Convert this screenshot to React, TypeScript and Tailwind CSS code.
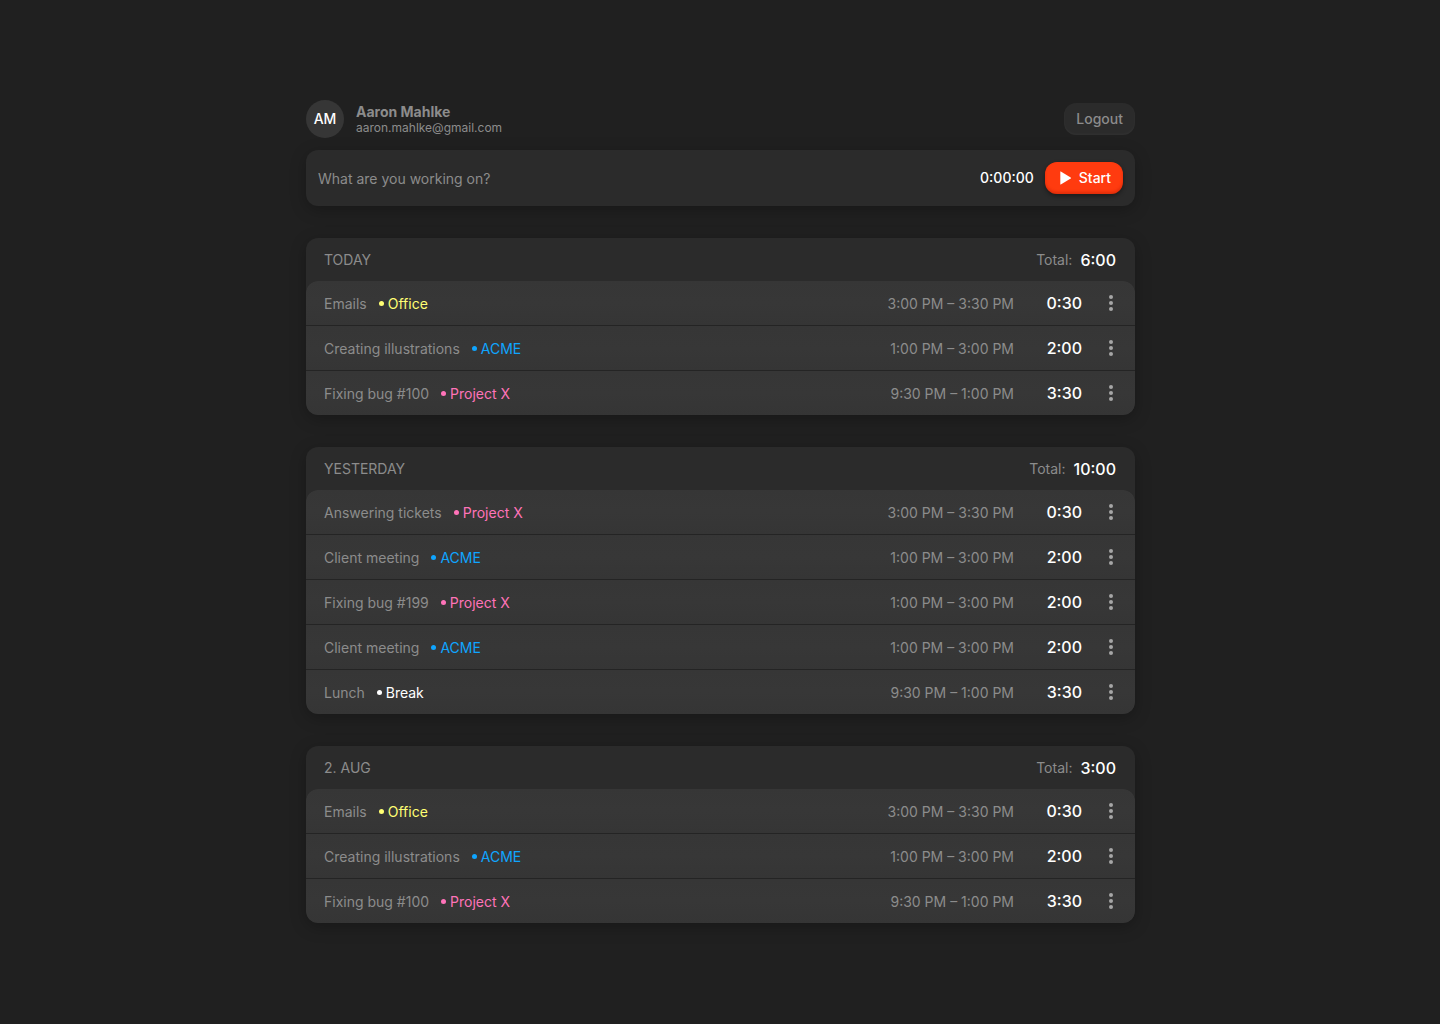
const projects = {
  Office: 'text-[#ffff73]',
  ACME: 'text-[#0fa5ff]',
  'Project X': 'text-[#ff73b9]',
  Break: 'text-white',
};

type Entry = {
  task: string;
  project: keyof typeof projects;
  range: string;
  duration: string;
};

type Day = { title: string; total: string; entries: Entry[] };

const shortDay: Entry[] = [
  { task: 'Emails', project: 'Office', range: '3:00 PM – 3:30 PM', duration: '0:30' },
  { task: 'Creating illustrations', project: 'ACME', range: '1:00 PM – 3:00 PM', duration: '2:00' },
  { task: 'Fixing bug #100', project: 'Project X', range: '9:30 PM – 1:00 PM', duration: '3:30' },
];

const days: Day[] = [
  { title: 'TODAY', total: '6:00', entries: shortDay },
  {
    title: 'YESTERDAY',
    total: '10:00',
    entries: [
      { task: 'Answering tickets', project: 'Project X', range: '3:00 PM – 3:30 PM', duration: '0:30' },
      { task: 'Client meeting', project: 'ACME', range: '1:00 PM – 3:00 PM', duration: '2:00' },
      { task: 'Fixing bug #199', project: 'Project X', range: '1:00 PM – 3:00 PM', duration: '2:00' },
      { task: 'Client meeting', project: 'ACME', range: '1:00 PM – 3:00 PM', duration: '2:00' },
      { task: 'Lunch', project: 'Break', range: '9:30 PM – 1:00 PM', duration: '3:30' },
    ],
  },
  { title: '2. AUG', total: '3:00', entries: shortDay },
];

function EntryRow({ entry }: { entry: Entry }) {
  return (
    <li className="flex h-11 items-center bg-linear-to-b from-[#363636] via-[#373737] to-[#353535] pr-3 pl-[18px]">
      <span className="pt-px">{entry.task}</span>
      <span className={`ml-3 flex items-center gap-1 ${projects[entry.project]}`}>
        <span className="size-[5px] rounded-full bg-current" />
        <span className="pt-px">{entry.project}</span>
      </span>
      <span className="ml-auto pt-px">{entry.range}</span>
      <span className="w-[68px] text-right text-base font-medium text-white">{entry.duration}</span>
      <button
        type="button"
        aria-label={`Options for ${entry.task}`}
        className="ml-[17px] flex h-8 w-6 items-center justify-center text-[#a6a6a6]"
      >
        <svg width="4" height="16" viewBox="0 0 4 16" fill="currentColor" aria-hidden="true">
          <circle cx="2" cy="2" r="2" />
          <circle cx="2" cy="8" r="2" />
          <circle cx="2" cy="14" r="2" />
        </svg>
      </button>
    </li>
  );
}

function DaySection({ day }: { day: Day }) {
  return (
    <section className="overflow-hidden rounded-xl bg-[#2b2b2b] shadow-[0_4px_16px_rgba(0,0,0,0.25)]">
      <header className="flex h-[43px] items-center justify-between pr-[19px] pl-[18px]">
        <h2>{day.title}</h2>
        <p className="flex items-center gap-2">
          Total: <span className="text-base font-medium text-white">{day.total}</span>
        </p>
      </header>
      <ul className="flex flex-col gap-px overflow-hidden rounded-xl bg-[#242424]">
        {day.entries.map((entry, index) => (
          <EntryRow key={index} entry={entry} />
        ))}
      </ul>
    </section>
  );
}

export default function App() {
  return (
    <div className="min-h-screen bg-[#202020] pt-[100px] pb-[101px] pl-px font-['Inter',sans-serif] text-sm text-[#8c8c8c]">
      <main className="mx-auto max-w-[829px]">
        <header className="flex items-center">
          <div className="flex size-[38px] items-center justify-center rounded-full bg-[#363636] font-medium text-white">
            AM
          </div>
          <div className="ml-3 pt-0.5">
            <p className="leading-4 font-bold">Aaron Mahlke</p>
            <p className="text-xs leading-4">aaron.mahlke@gmail.com</p>
          </div>
          <button
            type="button"
            className="ml-auto h-8 rounded-xl bg-[#2b2b2b] px-3 font-medium shadow-[inset_0_-1px_3px_rgba(255,255,255,0.04)]"
          >
            Logout
          </button>
        </header>

        <form
          className="mt-3 flex h-14 items-center rounded-xl bg-[#2b2b2b] px-3 shadow-[0_4px_16px_rgba(0,0,0,0.25)]"
          onSubmit={(event) => event.preventDefault()}
        >
          <input
            type="text"
            aria-label="Current task"
            placeholder="What are you working on?"
            className="min-w-0 flex-1 bg-transparent pt-px outline-none placeholder:text-[#8c8c8c]"
          />
          <span className="font-medium text-white">0:00:00</span>
          <button
            type="submit"
            className="ml-[11px] flex h-8 items-center gap-2 rounded-xl bg-[#ff3b0f] pr-3 pl-[15px] font-medium text-white shadow-[0_2px_4px_rgba(0,0,0,0.4),inset_0_-2px_3px_rgba(160,20,0,0.35)]"
          >
            <svg width="11" height="14" viewBox="0 0 11 14" fill="currentColor" aria-hidden="true">
              <path d="M.3.7v12.6q0 .5.5.2l9.9-6.1q.5-.4 0-.8L.8.5Q.3.2.3.7z" />
            </svg>
            Start
          </button>
        </form>

        <div className="mt-8 flex flex-col gap-8">
          {days.map((day) => (
            <DaySection key={day.title} day={day} />
          ))}
        </div>
      </main>
    </div>
  );
}
